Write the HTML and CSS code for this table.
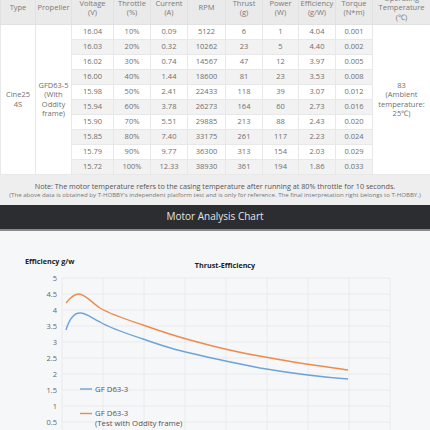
FILE: index.html
```html
<!DOCTYPE html>
<html><head><meta charset="utf-8">
 <title>Motor Test Data</title>
 <link rel="stylesheet" href="styles.css">
</head>
<body>
   <div class="page">
      <table class="data">
         <colgroup>
            <col class="c-type"><col class="c-prop"><col class="c-volt"><col class="c-thr"><col class="c-cur"><col class="c-rpm">
            <col class="c-thrust"><col class="c-pow"><col class="c-eff"><col class="c-tor"><col class="c-temp">
         </colgroup>
         <thead>
            <tr>
               <th>Type</th><th>Propeller</th><th>Voltage<br>(V)</th><th>Throttle<br>(%)</th><th>Current<br>(A)</th><th>RPM</th>
               <th>Thrust<br>(g)</th><th>Power<br>(W)</th><th>Efficiency<br>(g/W)</th><th>Torque<br>(N*m)</th><th>Operating<br>Temperature<br>(℃)</th>
            </tr>
         </thead>
         <tbody>
            <tr>
               <td rowspan="10" class="plain">Cine25<br>4S</td>
               <td rowspan="10" class="plain">GFD63-5<br>(With<br>Oddity<br>frame)</td>
               <td>16.04</td><td>10%</td><td>0.09</td><td>5122</td><td>6</td><td>1</td><td>4.04</td><td>0.001</td>
               <td rowspan="10" class="plain">83<br>(Ambient<br>temperature:<br>25℃)</td>
            </tr>
            <tr><td>16.03</td><td>20%</td><td>0.32</td><td>10262</td><td>23</td><td>5</td><td>4.40</td><td>0.002</td></tr>
            <tr><td>16.02</td><td>30%</td><td>0.74</td><td>14567</td><td>47</td><td>12</td><td>3.97</td><td>0.005</td></tr>
            <tr><td>16.00</td><td>40%</td><td>1.44</td><td>18600</td><td>81</td><td>23</td><td>3.53</td><td>0.008</td></tr>
            <tr><td>15.98</td><td>50%</td><td>2.41</td><td>22433</td><td>118</td><td>39</td><td>3.07</td><td>0.012</td></tr>
            <tr><td>15.94</td><td>60%</td><td>3.78</td><td>26273</td><td>164</td><td>60</td><td>2.73</td><td>0.016</td></tr>
            <tr><td>15.90</td><td>70%</td><td>5.51</td><td>29885</td><td>213</td><td>88</td><td>2.43</td><td>0.020</td></tr>
            <tr><td>15.85</td><td>80%</td><td>7.40</td><td>33175</td><td>261</td><td>117</td><td>2.23</td><td>0.024</td></tr>
            <tr><td>15.79</td><td>90%</td><td>9.77</td><td>36300</td><td>313</td><td>154</td><td>2.03</td><td>0.029</td></tr>
            <tr><td>15.72</td><td>100%</td><td>12.33</td><td>38930</td><td>361</td><td>194</td><td>1.86</td><td>0.033</td></tr>
         </tbody>
      </table>

      <div class="note">
         <p class="note-main">Note: The motor temperature refers to the casing temperature after running at 80% throttle for 10 seconds.</p>
         <p class="note-small">(The above data is obtained by T-HOBBY's independent platform test and is only for reference. The final interpretation right belongs to T-HOBBY.)</p>
      </div>

      <div class="chart-bar">Motor Analysis Chart</div>

      <div class="chart">
         <svg class="chart-svg" width="430" height="201" viewBox="0 229 430 201">
            <g class="grid">
               <line x1="62" y1="276" x2="390" y2="276"/>
               <line x1="62" y1="292" x2="390" y2="292"/>
               <line x1="62" y1="308" x2="390" y2="308"/>
               <line x1="62" y1="324" x2="390" y2="324"/>
               <line x1="62" y1="340" x2="390" y2="340"/>
               <line x1="62" y1="356" x2="390" y2="356"/>
               <line x1="62" y1="372" x2="390" y2="372"/>
               <line x1="62" y1="388" x2="390" y2="388"/>
               <line x1="62" y1="404" x2="390" y2="404"/>
               <line x1="62" y1="420" x2="390" y2="420"/>
               <line x1="62" y1="276" x2="62" y2="440"/>
               <line x1="103" y1="276" x2="103" y2="440"/>
               <line x1="144" y1="276" x2="144" y2="440"/>
               <line x1="185" y1="276" x2="185" y2="440"/>
               <line x1="226" y1="276" x2="226" y2="440"/>
               <line x1="267" y1="276" x2="267" y2="440"/>
               <line x1="308" y1="276" x2="308" y2="440"/>
               <line x1="349" y1="276" x2="349" y2="440"/>
               <line x1="390" y1="276" x2="390" y2="440"/>
            </g>
            <g class="axis">
               <text x="57" y="279">5</text>
               <text x="57" y="295">4.5</text>
               <text x="57" y="311">4</text>
               <text x="57" y="327">3.5</text>
               <text x="57" y="343">3</text>
               <text x="57" y="359">2.5</text>
               <text x="57" y="375">2</text>
               <text x="57" y="391">1.5</text>
               <text x="57" y="407">1</text>
               <text x="57" y="423">0.5</text>
            </g>
            <text class="y-title" x="25" y="261.5">Efficiency g/w</text>
            <text class="c-title" x="225" y="266">Thrust-Efficiency</text>

            <path class="line-orange" d="M66,301 C70,296 74,292 79,292 C85,292 92,301 100,306 C112,313 128,318 143,323 C160,329 175,334 190,338 C215,345 240,351 265,355 C290,360 320,364 348,368"/>
            <path class="line-blue" d="M66,328 C69,318 73,311 80,311 C87,311 93,317 100,320 C112,327 128,332 143,337 C160,343 175,348 190,351 C215,357 240,362 260,366 C290,371 320,375 348,377"/>

            <line class="line-blue" x1="80" y1="387" x2="92" y2="387"/>
            <text class="legend" x="95" y="390">GF D63-3</text>
            <line class="line-orange" x1="80" y1="411.5" x2="92" y2="411.5"/>
            <text class="legend" x="95" y="414">GF D63-3</text>
            <text class="legend" x="95" y="423.5">(Test with Oddity frame)</text>
         </svg>
      </div>
   </div>
</body></html>
```

FILE: styles.css
```css
body {
  margin: 0;
  padding: 0;
  background: #f6f7f9;
  font-family: "Open Sans", "Liberation Sans", sans-serif;
  overflow: hidden;
}
.page {
  width: 430px;
  margin-top: -9px;
}
.data {
  width: 430px;
  border-collapse: collapse;
  table-layout: fixed;
  font-size: 7.5px;
  color: #6f6f6f;
  text-align: center;
}
.c-type { width: 35px; }
.c-prop { width: 36px; }
.c-volt { width: 42px; }
.c-thr { width: 37px; }
.c-cur { width: 37px; }
.c-rpm { width: 38px; }
.c-thrust { width: 37px; }
.c-pow { width: 36px; }
.c-eff { width: 37px; }
.c-tor { width: 37px; }
.c-temp { width: 58px; }
.data th {
  height: 32px;
  padding: 0;
  background: #eaeaea;
  font-weight: normal;
  line-height: 9.5px;
  color: #7a7a7a;
  border: 1px solid #e2e2e2;
}
.data td {
  height: 14px;
  padding: 0;
  line-height: 9.5px;
  background: #fff;
  border: 1px solid #e8e8e8;
}
.data tbody tr:nth-child(even) td {
  background: #f2f2f2;
}
.data td.plain,
.data tbody tr:nth-child(even) td.plain {
  background: #fff;
}
.note {
  height: 30px;
  background: #eeeeee;
  text-align: center;
  color: #555;
  padding-top: 7px;
  box-sizing: border-box;
}
.note p {
  margin: 0;
}
.note-main {
  font-size: 7.2px;
  line-height: 9px;
}
.note-small {
  font-size: 6.1px;
  line-height: 8px;
  color: #777;
  white-space: nowrap;
}
.chart-bar {
  height: 24px;
  line-height: 23px;
  background: #2c2d31;
  border-bottom: 2px solid #8a8a8a;
  color: #e4e4e4;
  text-align: center;
  font-size: 10px;
}
.chart-svg {
  display: block;
}
.grid line {
  stroke: #e9eaec;
  stroke-width: 1;
}
.axis text {
  font-size: 7.5px;
  fill: #666;
  text-anchor: end;
}
.y-title,
.c-title {
  font-size: 7.2px;
  font-weight: bold;
  fill: #222;
}
.c-title {
  text-anchor: middle;
}
.legend {
  font-size: 7.8px;
  fill: #555;
}
.line-orange {
  fill: none;
  stroke: #ee8b4a;
  stroke-width: 1.4;
}
.line-blue {
  fill: none;
  stroke: #6ea3d6;
  stroke-width: 1.4;
}
```
